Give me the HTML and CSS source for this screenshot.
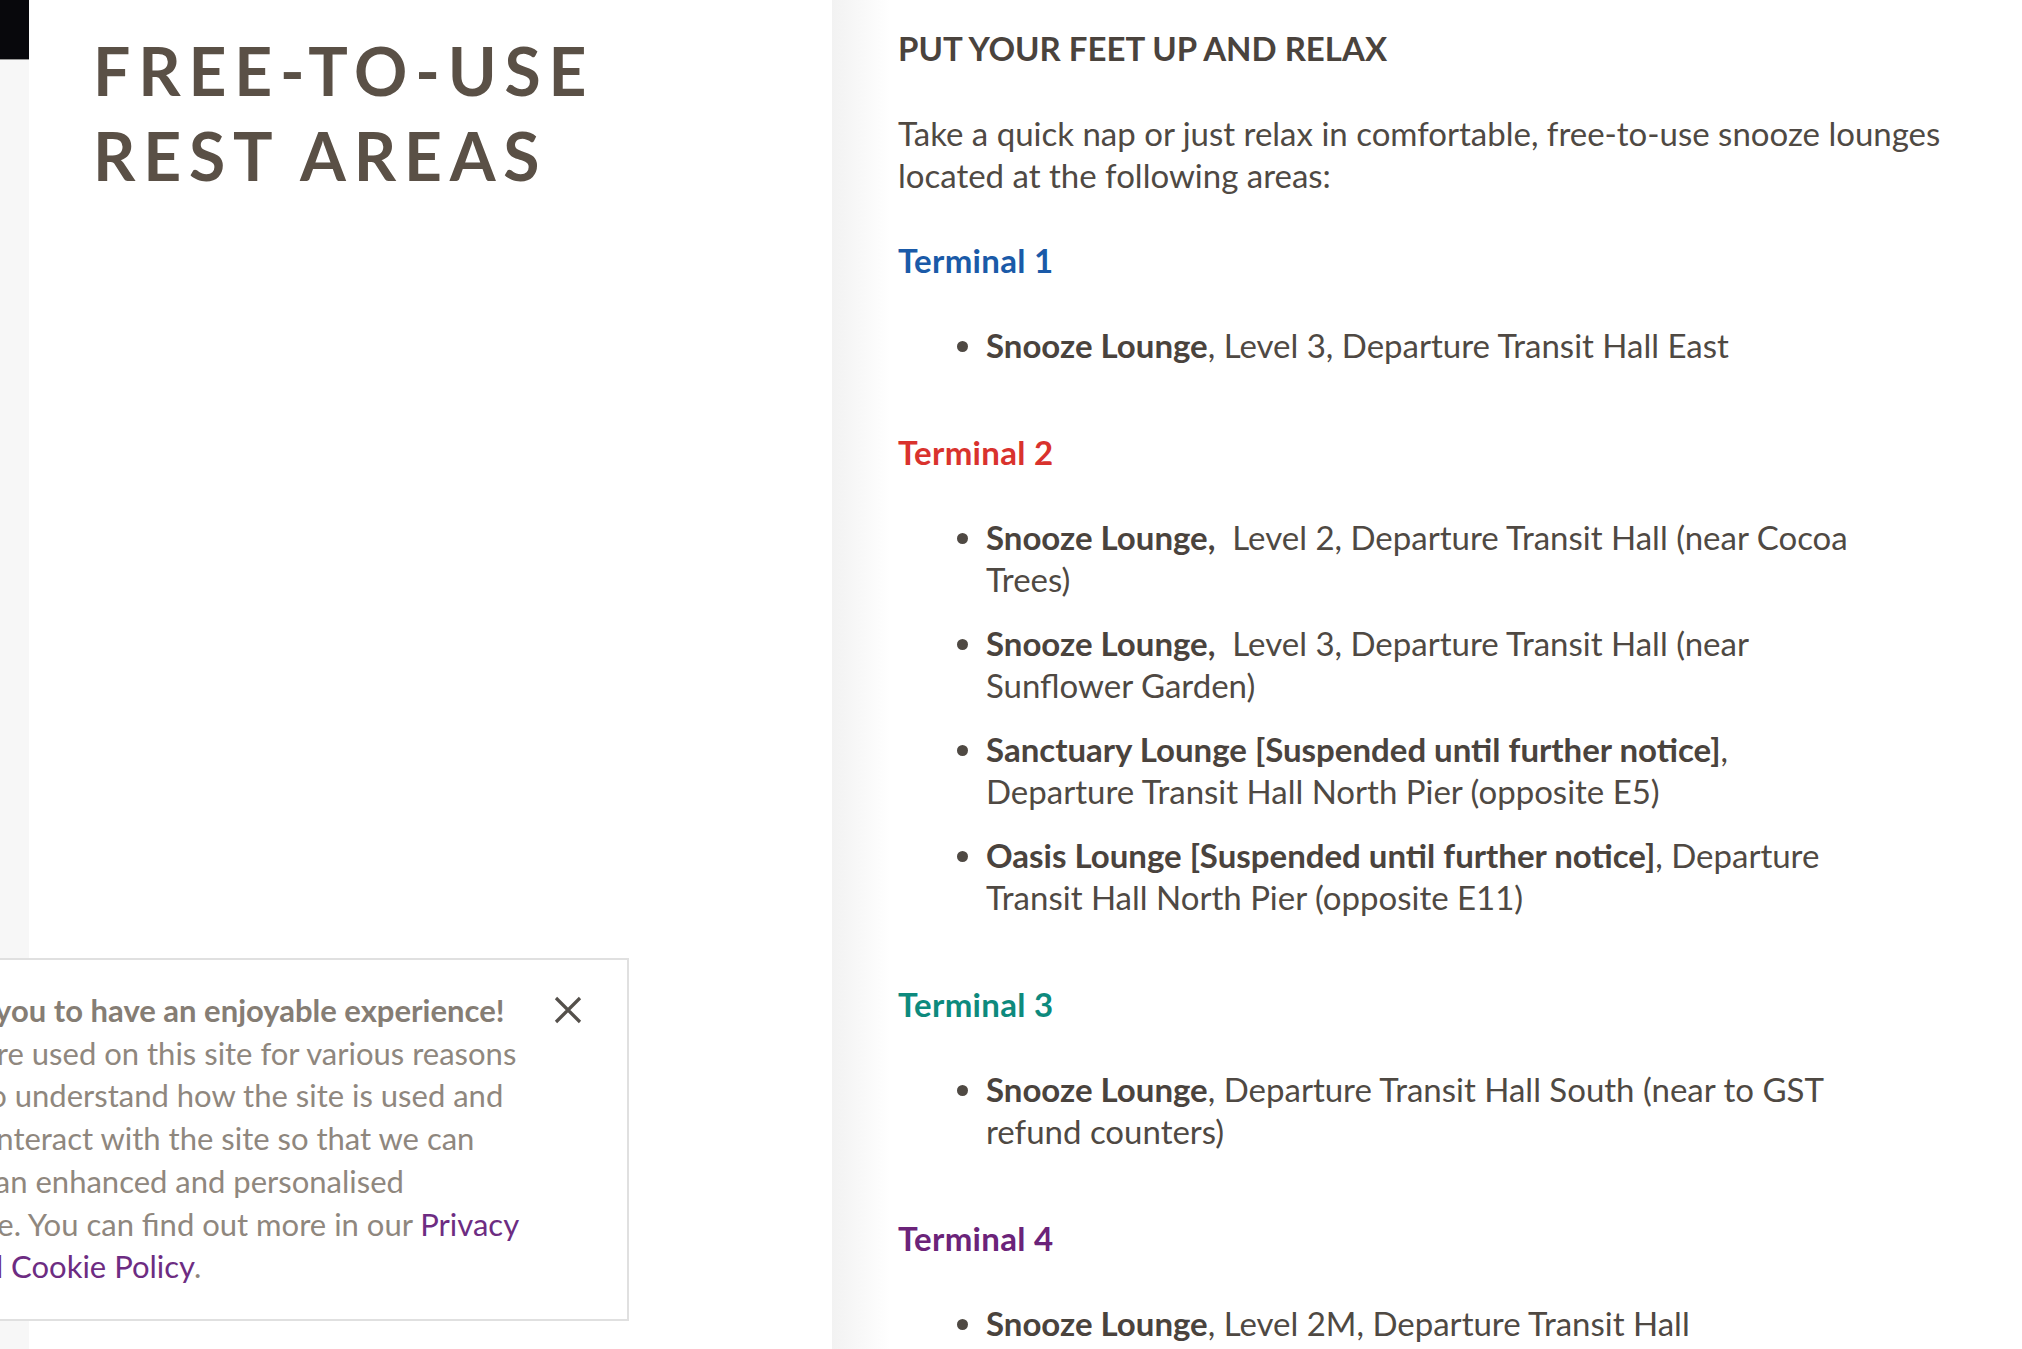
FILE: index.html
```html
<!DOCTYPE html>
<html lang="en">
<head>
    <meta charset="UTF-8">
    <meta name="viewport" content="width=device-width, initial-scale=1.0">
    <title>Free-to-use Rest Areas</title>
    <link rel="stylesheet" href="styles.css">
</head>
<body>
    <div class="page">
        <div class="rail">
            <div class="rail-tab"></div>
        </div>

        <div class="intro">
            <h1 class="intro-title">FREE-TO-USE<br>REST AREAS</h1>
        </div>

        <div class="content">
            <h2 class="content-title">PUT YOUR FEET UP AND RELAX</h2>
            <p class="lead">Take a quick nap or just relax in comfortable, free-to-use snooze lounges located at the following areas:</p>

            <h3 class="terminal t1">Terminal 1</h3>
            <ul class="lounges">
                <li><b>Snooze Lounge</b>, Level 3, Departure Transit Hall East</li>
            </ul>

            <h3 class="terminal t2">Terminal 2</h3>
            <ul class="lounges">
                <li><b>Snooze Lounge,</b>&nbsp; Level 2, Departure Transit Hall (near Cocoa Trees)</li>
                <li><b>Snooze Lounge,</b>&nbsp; Level 3, Departure Transit Hall (near Sunflower Garden)</li>
                <li><b>Sanctuary Lounge [Suspended until further notice]</b>, Departure Transit Hall North Pier (opposite E5)</li>
                <li><b>Oasis Lounge [Suspended until further notice]</b>, Departure Transit Hall North Pier (opposite E11)</li>
            </ul>

            <h3 class="terminal t3">Terminal 3</h3>
            <ul class="lounges">
                <li><b>Snooze Lounge</b>, Departure Transit Hall South (near to GST refund counters)</li>
            </ul>

            <h3 class="terminal t4">Terminal 4</h3>
            <ul class="lounges">
                <li><b>Snooze Lounge</b>, Level 2M, Departure Transit Hall</li>
            </ul>
        </div>
    </div>

    <div class="cookie-box">
        <div class="cookie-text">
            <b>We want you to have an enjoyable experience!</b><br>
            Cookies are used on this site for various reasons<br>
            in order to understand how the site is used and<br>
            how you interact with the site so that we can<br>
            offer you an enhanced and personalised<br>
            experience. You can find out more in our <a href="#">Privacy</a><br>
            <a href="#">Policy and</a> <a href="#">Cookie Policy</a>.
        </div>
        <button class="cookie-close" aria-label="Close">
            <svg width="28" height="28" viewBox="0 0 28 28">
                <path d="M2 2 L26 26 M26 2 L2 26" stroke="#54504b" stroke-width="3.2" fill="none"/>
            </svg>
        </button>
    </div>
</body>
</html>
```

FILE: styles.css
```css
body {
    margin: 0;
    font-family: Lato, "Open Sans", sans-serif;
    color: #4f4943;
    background-color: #fff;
    overflow: hidden;
}

.page {
    display: flex;
    align-items: flex-start;
    min-height: 100vh;
}

.rail {
    width: 29px;
    flex-shrink: 0;
    align-self: stretch;
    background-color: #f7f7f7;
}

.rail-tab {
    height: 59px;
    background-color: #08080c;
    border-bottom: 1px solid #999;
}

.intro {
    width: 739px;
    flex-shrink: 0;
    padding: 28px 0 0 64px;
}

.intro-title {
    margin: 0;
    font-size: 66px;
    line-height: 85px;
    font-weight: 700;
    letter-spacing: 7.8px;
    color: #5a5046;
}

.content {
    flex: 1;
    align-self: stretch;
    padding: 27px 0 0 66px;
    background: linear-gradient(to right, #f2f2f2 0, #fff 58px);
}

.content-title,
.lead,
.terminal,
.lounges {
    width: 1060px;
    font-size: 33px;
    line-height: 42px;
}

.content-title {
    margin: 0 0 43px;
    font-weight: 700;
    color: #4a433d;
}

.lead {
    margin: 0 0 43px;
}

.terminal {
    margin: 0 0 43px;
    font-weight: 700;
    letter-spacing: 0.3px;
}

.t1 { color: #1a5aa8; }
.t2 { color: #d9322d; }
.t3 { color: #0d8a7d; }
.t4 { color: #6b2379; }

.lounges {
    margin: 0 0 65px;
    padding: 0 88px;
    box-sizing: border-box;
}

.lounges li + li {
    margin-top: 22px;
}

.lounges b {
    font-weight: 700;
    color: #4a433d;
}

.cookie-box {
    position: fixed;
    left: -181px;
    top: 958px;
    width: 810px;
    height: 363px;
    box-sizing: border-box;
    display: flex;
    gap: 20px;
    padding: 29px 45px 0 44px;
    background-color: #fff;
    border: 2px solid #e0e0e0;
}

.cookie-text {
    flex: 1;
    font-size: 31px;
    line-height: 42.7px;
    color: #8f877e;
    white-space: nowrap;
}

.cookie-text b {
    color: #857d74;
}

.cookie-text a {
    color: #6d2c82;
    text-decoration: none;
}

.cookie-close {
    width: 28px;
    height: 42px;
    padding: 0;
    border: none;
    background: none;
    display: flex;
    align-items: center;
    justify-content: center;
}
```
